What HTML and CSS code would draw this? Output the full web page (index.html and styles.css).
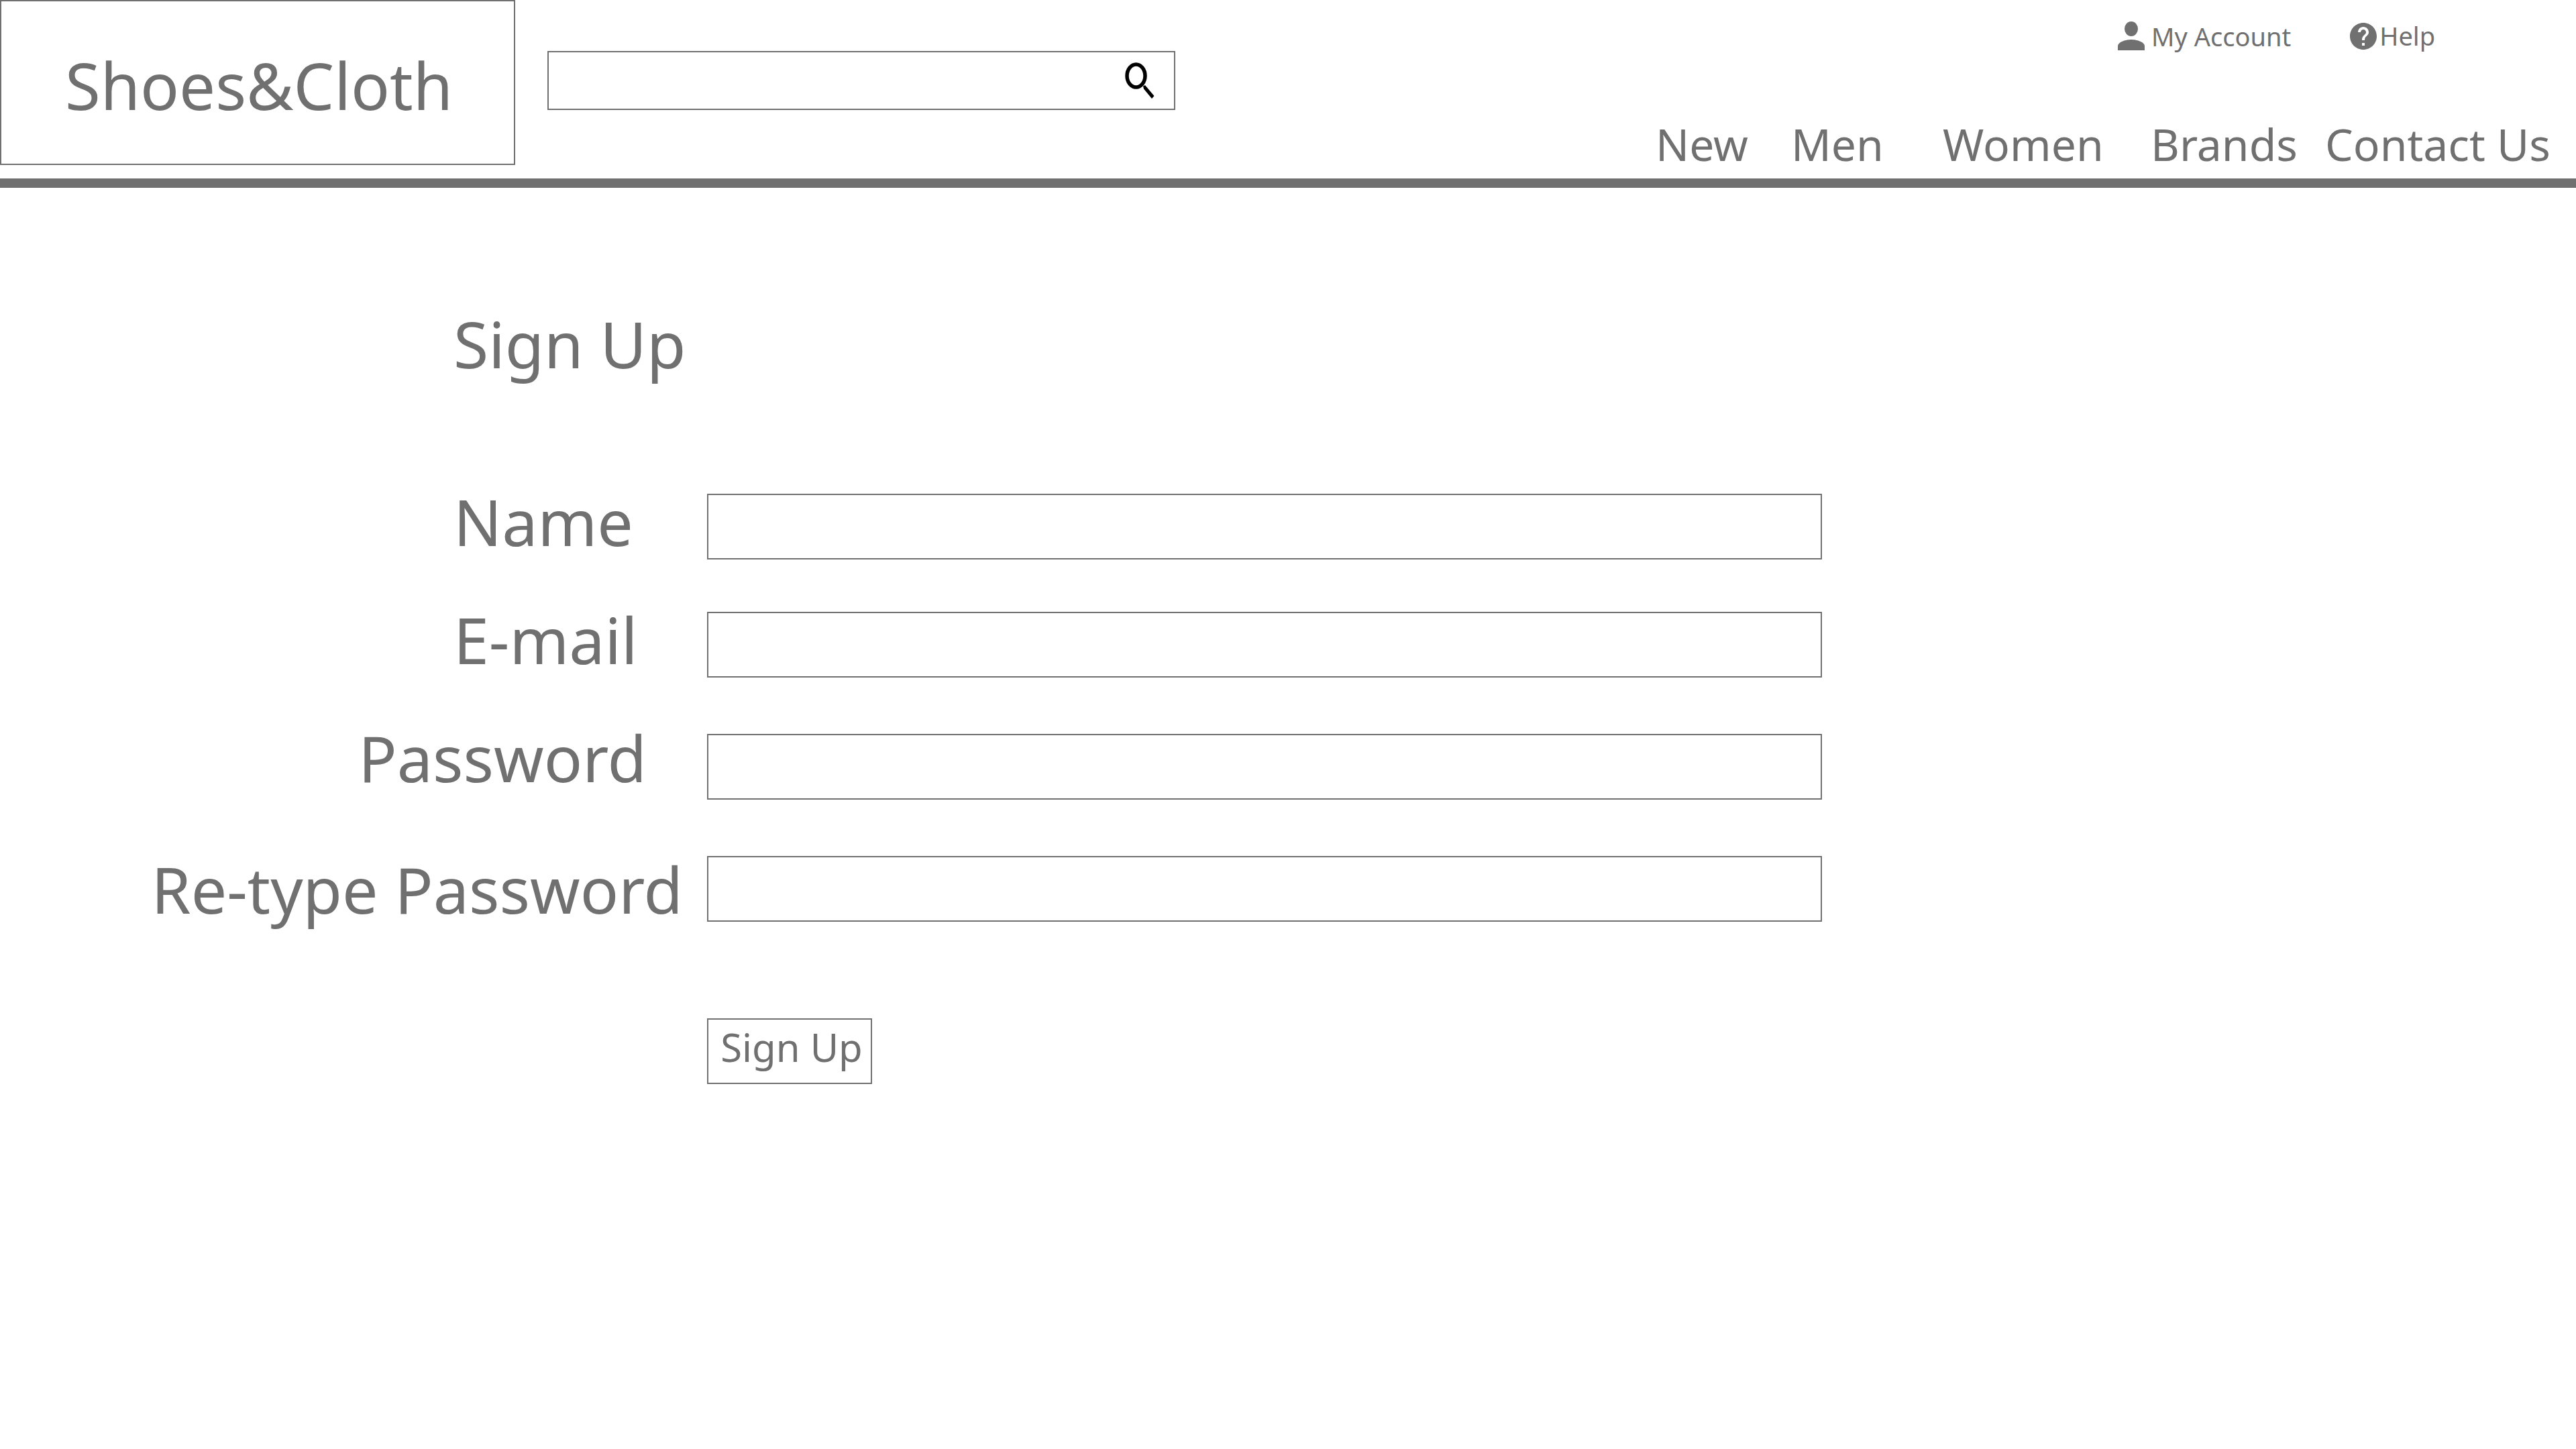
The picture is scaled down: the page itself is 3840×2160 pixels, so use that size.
FILE: index.html
```html
<!DOCTYPE html>
<html lang="en">
<head>
<meta charset="utf-8">
<title>Sign Up - Shoes&amp;Cloth</title>
<link rel="stylesheet" href="styles.css">
</head>
<body>
<header class="site-header">
  <a class="logo" href="#">Shoes&amp;Cloth</a>
  <form class="search" role="search">
    <input class="search-input" type="search" aria-label="Search">
    <button class="search-button" type="submit" aria-label="Search">
      <svg class="search-icon" viewBox="0 0 44 54" aria-hidden="true">
        <ellipse cx="16.500" cy="20" rx="13.500" ry="17" fill="none" stroke="#000" stroke-width="5.500"/>
        <path d="M27 35.500L30 34L43.500 50L40 54L28 39.500Z" fill="#000"/>
      </svg>
    </button>
  </form>
  <div class="header-links">
    <ul class="account-links">
      <li><a class="account-link" href="#">
        <svg class="user-icon" viewBox="0 0 40 43" aria-hidden="true">
          <ellipse cx="20" cy="11" rx="10" ry="11"/>
          <path d="M0 43V37C0 30 13 27 20 27S40 30 40 37V43Z"/>
        </svg>
        My Account</a></li>
      <li><a class="account-link account-link-help" href="#">
        <svg class="help-icon" viewBox="2 2 20 20" aria-hidden="true">
          <path d="M12 2C6.480 2 2 6.480 2 12s4.480 10 10 10 10-4.480 10-10S17.520 2 12 2zm1 17h-2v-2h2v2zm2.070-7.750l-.9.920C13.450 12.900 13 13.500 13 15h-2v-.5c0-1.100.45-2.100 1.170-2.830l1.240-1.260c.37-.36.59-.86.59-1.410 0-1.100-.9-2-2-2s-2 .9-2 2H8c0-2.210 1.790-4 4-4s4 1.790 4 4c0 .88-.36 1.680-.93 2.250z"/>
        </svg>
        Help</a></li>
    </ul>
    <nav class="main-nav">
      <a href="#">New</a>
      <a href="#">Men</a>
      <a href="#">Women</a>
      <a href="#">Brands</a>
      <a href="#">Contact Us</a>
    </nav>
  </div>
</header>
<main>
  <form class="signup">
    <div class="form-row form-row-title">
      <h1 class="title">Sign Up</h1>
    </div>
    <div class="form-row">
      <label class="label" for="name">Name</label>
      <input class="field" id="name" type="text">
    </div>
    <div class="form-row form-row-email">
      <label class="label" for="email">E-mail</label>
      <input class="field" id="email" type="email">
    </div>
    <div class="form-row form-row-password">
      <label class="label label-wide label-password" for="password">Password</label>
      <input class="field" id="password" type="password">
    </div>
    <div class="form-row form-row-password">
      <label class="label label-wide label-confirm" for="confirm">Re-type Password</label>
      <input class="field" id="confirm" type="password">
    </div>
    <div class="form-row form-row-submit">
      <button class="submit" type="submit">Sign Up</button>
    </div>
  </form>
</main>
</body>
</html>
```
FILE: styles.css
```css
* {
  box-sizing: border-box;
}

body {
  margin: 0;
  background: #fff;
  color: #707070;
  font-family: "Noto Sans", "Open Sans", sans-serif;
}

a {
  color: inherit;
  text-decoration: none;
}

/* Header */
.site-header {
  display: flex;
  align-items: flex-start;
  min-height: 280px;
  border-bottom: 14px solid #707070;
}

.logo {
  flex: 0 0 20%;
  padding: 61px 0 53px 4px;
  border: 2px solid #707070;
  font-size: 96px;
  line-height: 128px;
  text-align: center;
}

.search {
  display: flex;
  flex: 0 1 936px;
  height: 88px;
  margin: 76px 0 0 48px;
  border: 2px solid #707070;
}

.search-input {
  flex: 1;
  min-width: 0;
  padding: 0 24px;
  border: 0;
  outline: 0;
  background: none;
  color: inherit;
  font: inherit;
  font-size: 38px;
}

.search-button {
  display: flex;
  padding: 15px 29px 0 12px;
  border: 0;
  background: none;
}

.search-icon {
  width: 44px;
  height: 54px;
}

.header-links {
  display: flex;
  flex-direction: column;
  align-items: flex-end;
  margin-left: auto;
}

.account-links {
  display: flex;
  gap: 88px;
  margin: 0;
  padding: 26px 210px 0 0;
  list-style: none;
}

.account-link {
  display: flex;
  gap: 10px;
  font-size: 38px;
  line-height: 56px;
  white-space: nowrap;
}

.account-link-help {
  gap: 4px;
  line-height: 54px;
}

.user-icon {
  width: 40px;
  height: 43px;
  margin-top: 6px;
  fill: currentColor;
}

.help-icon {
  width: 40px;
  height: 40px;
  margin-top: 8px;
  fill: currentColor;
}

.main-nav {
  display: grid;
  grid-template-columns: 202px 226px 310px 260px 374px;
  margin-top: 84px;
  font-size: 66px;
  line-height: 96px;
  white-space: nowrap;
}

/* Sign-up form */
.signup {
  padding-top: 168px;
}

.form-row {
  display: grid;
  grid-template-columns: 676fr 378fr 1662fr 1124fr;
  align-items: start;
}

.form-row-title {
  margin-bottom: 160px;
}

.form-row-email {
  margin-top: 78px;
}

.form-row-password {
  margin-top: 84px;
}

.form-row-submit {
  margin-top: 144px;
}

.title {
  grid-column: 2 / 4;
  margin: 0;
  font-size: 95px;
  font-weight: 400;
  line-height: 128px;
}

.label {
  grid-column: 2;
  font-size: 95px;
  line-height: 82px;
  white-space: nowrap;
}

.label-wide {
  grid-column: 1 / 3;
  text-align: right;
}

.label-password {
  padding-right: 90px;
  line-height: 70px;
}

.label-confirm {
  padding-right: 36px;
  line-height: 98px;
}

.field {
  grid-column: 3;
  width: 100%;
  height: 98px;
  padding: 0 24px;
  border: 2px solid #707070;
  border-radius: 0;
  outline: 0;
  background: #fff;
  color: inherit;
  font: inherit;
  font-size: 58px;
}

.submit {
  grid-column: 3;
  justify-self: start;
  width: 246px;
  height: 98px;
  padding: 0 0 12px 6px;
  border: 2px solid #707070;
  background: #fff;
  color: inherit;
  font: inherit;
  font-size: 58px;
  line-height: 82px;
  white-space: nowrap;
}
```
